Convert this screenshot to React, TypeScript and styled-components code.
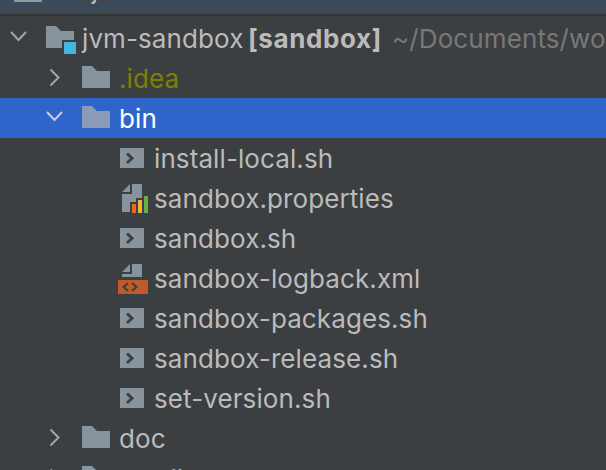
import React from "react";
import styled, { createGlobalStyle } from "styled-components";

const GlobalStyle = createGlobalStyle`
html, body {
    margin: 0;
    padding: 0;
    background: #3c3f41;
}
`

const Window = styled.div`
width: 606px;
height: 470px;
overflow: hidden;
background: #3c3f41;
font-family: Inter, "Liberation Sans", sans-serif;
font-size: 26px;
letter-spacing: 0.1px;
color: #bbbbbb;
`

const TitleBar = styled.div`
height: 14px;
overflow: hidden;
display: flex;
align-items: flex-end;
gap: 8px;
padding-left: 14px;
background: #3c4957;
border-bottom: 2px solid #333333;
`

const TitleIcon = styled.span`
width: 28px;
height: 2px;
margin-bottom: 12px;
background: #8d9aa5;
`

const TitleText = styled.span`
line-height: 30px;
margin-bottom: 9px;
color: #bbbbbb;
`

const Tree = styled.div`
display: flex;
flex-direction: column;
padding-top: 2px;
`

const Row = styled.div<{ $indent: number; $selected?: boolean }>`
height: 40px;
flex: none;
display: flex;
align-items: center;
white-space: nowrap;
padding-left: ${p => p.$indent}px;
background: ${p => (p.$selected ? "#2f65ca" : "transparent")};
color: ${p => (p.$selected ? "#ffffff" : "#bbbbbb")};
`

const Arrow = styled.svg<{ $selected?: boolean }>`
width: 22px;
height: 22px;
flex: none;
margin-right: 14px;
fill: none;
stroke: ${p => (p.$selected ? "#c3cfe8" : "#a3a5a6")};
stroke-width: 2;
`

const IconBox = styled.svg<{ $gap: number }>`
width: 32px;
height: 32px;
flex: none;
margin-right: ${p => p.$gap}px;
`

const Name = styled.span<{ $color?: string }>`
color: ${p => p.$color || "inherit"};
`

const ModuleTag = styled.b`
font-weight: 700;
letter-spacing: 0.6px;
margin-left: -3px;
`

const Hint = styled.span`
color: #787878;
margin-left: 10px;
`

const GREY = "#87949e"
const BG = "#3c3f41"

const Down = ({ selected }: { selected?: boolean }) => (
    <Arrow viewBox="0 0 22 22" $selected={selected}><path d="M3 5l7.5 8L18 5" /></Arrow>
)
const Right = () => (
    <Arrow viewBox="0 0 22 22"><path d="M6.5 2.5l8 8-8 8" /></Arrow>
)

const Folder = ({ module, selected }: { module?: boolean; selected?: boolean }) => (
    <IconBox viewBox="0 0 32 32" $gap={module ? 6 : 7}>
        <path d="M2 4h10l5 5h13v17H2z" fill={selected ? "#8a9cb5" : GREY} />
        {module && <rect x="18" y="18" width="14" height="14" fill={BG} />}
        {module && <rect x="20" y="20" width="12" height="12" fill="#40b6e0" />}
    </IconBox>
)

const Shell = () => (
    <IconBox viewBox="0 0 32 32" $gap={4}>
        <rect x="2" y="6" width="24" height="20" fill={GREY} />
        <path d="M9 11.5l5 4.75-5 4.75" fill="none" stroke={BG} strokeWidth="3" />
    </IconBox>
)

const Properties = () => (
    <IconBox viewBox="0 0 32 32" $gap={4}>
        <path d="M12 2v8H4zM14 2h10v28H4V12h10z" fill={GREY} />
        <rect x="12" y="20" width="8" height="12" fill={BG} />
        <rect x="18" y="16" width="8" height="16" fill={BG} />
        <rect x="14" y="22" width="4" height="9" fill="#f26522" />
        <rect x="20" y="18" width="4" height="13" fill="#f4af3d" />
        <rect x="26" y="14" width="4" height="17" fill="#62b543" />
    </IconBox>
)

const Xml = () => (
    <IconBox viewBox="0 0 32 32" $gap={4}>
        <path d="M12 2v8H4zM14 2h10v13H4v-3h10z" fill={GREY} />
        <rect x="0" y="18" width="30" height="14" fill="#bf5a2b" />
        <path d="M10 21l-4.5 4 4.5 4M14 21l4.5 4-4.5 4" fill="none" stroke={BG} strokeWidth="2" />
    </IconBox>
)

const ShellRow = ({ name }: { name: string }) => (
    <Row $indent={118}>
        <Shell />
        <Name>{name}</Name>
    </Row>
)

export default function App() {
    return (
        <Window>
            <GlobalStyle />
            <TitleBar>
                <TitleIcon />
                <TitleText>Project</TitleText>
            </TitleBar>
            <Tree>
                <Row $indent={8}>
                    <Down />
                    <Folder module />
                    <Name>jvm-sandbox <ModuleTag>[sandbox]</ModuleTag></Name>
                    <Hint>~/Documents/work</Hint>
                </Row>
                <Row $indent={44}>
                    <Right />
                    <Folder />
                    <Name $color="#808000">.idea</Name>
                </Row>
                <Row $indent={44} $selected>
                    <Down selected />
                    <Folder selected />
                    <Name>bin</Name>
                </Row>
                <ShellRow name="install-local.sh" />
                <Row $indent={118}>
                    <Properties />
                    <Name>sandbox.properties</Name>
                </Row>
                <ShellRow name="sandbox.sh" />
                <Row $indent={118}>
                    <Xml />
                    <Name>sandbox-logback.xml</Name>
                </Row>
                <ShellRow name="sandbox-packages.sh" />
                <ShellRow name="sandbox-release.sh" />
                <ShellRow name="set-version.sh" />
                <Row $indent={44}>
                    <Right />
                    <Folder />
                    <Name>doc</Name>
                </Row>
                <Row $indent={44}>
                    <Right />
                    <Folder />
                    <Name>small</Name>
                </Row>
            </Tree>
        </Window>
    )
}
